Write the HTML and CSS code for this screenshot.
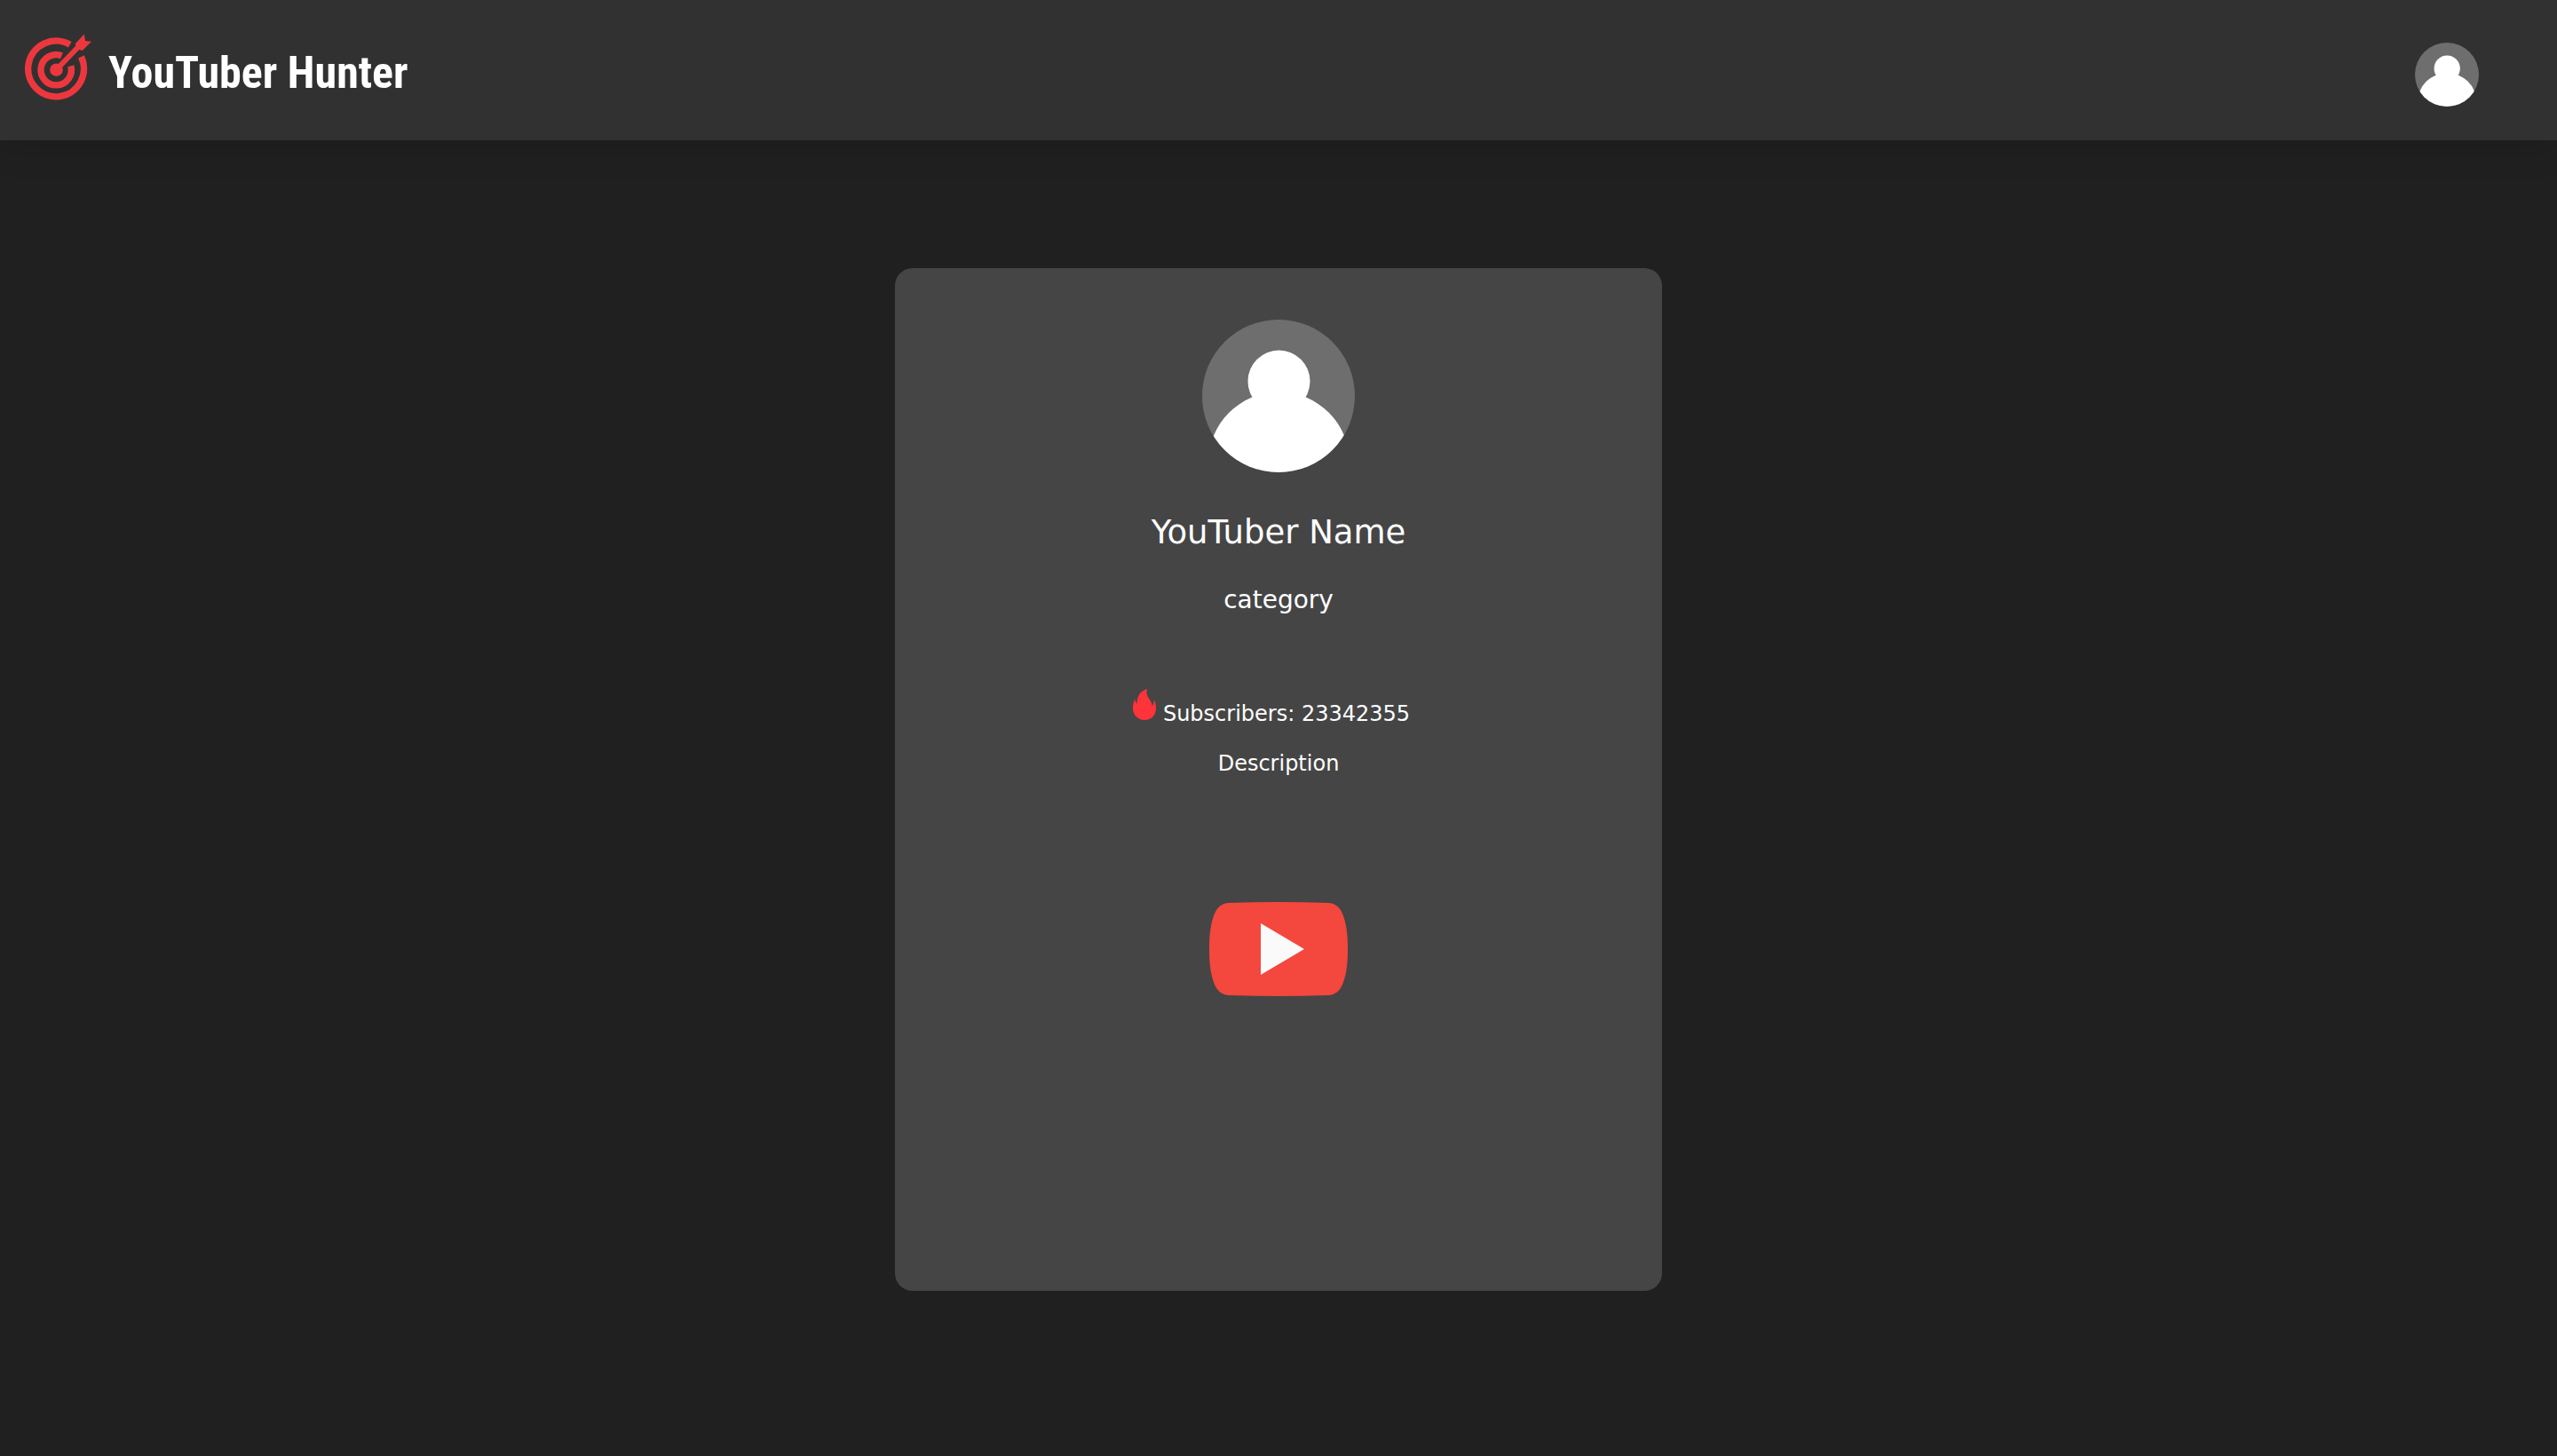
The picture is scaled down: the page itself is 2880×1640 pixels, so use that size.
FILE: index.html
```html
<!DOCTYPE html>
<html lang="en">
<head>
<meta charset="utf-8">
<meta name="viewport" content="width=device-width, initial-scale=1">
<title>YouTuber Hunter</title>
<link rel="stylesheet" href="styles.css">
</head>
<body>
<header class="topbar">
  <a class="brand" href="#">
    <svg class="brand-icon" viewBox="0 0 76 77" aria-hidden="true">
      <g fill="none" stroke="#ed373e" stroke-width="7.4">
        <path d="M50.8 12.200A31.400 31.400 0 1 0 63.400 25.800"/>
        <path d="M41.500 24.700A17.200 17.200 0 1 0 51.800 36.200"/>
      </g>
      <circle cx="35.500" cy="40.700" r="7.300" fill="#ed373e"/>
      <path d="M36 40 60 15" stroke="#ed373e" stroke-width="6"/>
      <path d="M56.800 11.200 66.800 0.500 68 8 75 8.800 64.800 19 61.500 18 57.500 14Z" fill="#ed373e"/>
    </svg>
    <span class="brand-name">YouTuber Hunter</span>
  </a>
  <button class="account" type="button" aria-label="Account">
    <svg class="avatar" viewBox="0 0 172 172" aria-hidden="true">
      <clipPath id="small-disc"><circle cx="86" cy="86" r="86"/></clipPath>
      <g clip-path="url(#small-disc)">
        <rect width="172" height="172" fill="#6e6e6e"/>
        <circle cx="86.500" cy="69.500" r="35" fill="#fff"/>
        <circle cx="86.500" cy="161" r="79.500" fill="#fff"/>
      </g>
    </svg>
  </button>
</header>
<main class="page">
  <article class="card">
    <svg class="portrait" viewBox="0 0 172 172" aria-hidden="true">
      <clipPath id="large-disc"><circle cx="86" cy="86" r="86"/></clipPath>
      <g clip-path="url(#large-disc)">
        <rect width="172" height="172" fill="#6e6e6e"/>
        <circle cx="86.500" cy="69.500" r="35" fill="#fff"/>
        <circle cx="86.500" cy="161" r="79.500" fill="#fff"/>
      </g>
    </svg>
    <h1 class="name">YouTuber Name</h1>
    <p class="category">category</p>
    <p class="subscribers">
      <svg class="flame" viewBox="0 0 26 35" aria-hidden="true">
        <path fill="#ff333a" d="M16 0C15 4 15.500 7 17.500 10C20 13.500 21.500 16 21.800 19.500C23.300 17.500 23.900 15 23.800 12.300C25.500 15 26 18 26 21.500C26 30 20.500 35 13.500 35C5.500 35 0 29.500 0 21.500C0 17.500 1 13.500 2.600 11.500C2.700 14 3.300 15.500 4.700 16.500C4.300 8 8.500 2.500 16 0Z"/>
      </svg>
      <span>Subscribers: 23342355</span>
    </p>
    <p class="description">Description</p>
    <a class="channel" href="#" aria-label="YouTube channel">
      <svg class="channel-icon" viewBox="0 0 156 106" aria-hidden="true">
        <path fill="#f4473e" d="M22 1Q78 -1 134 1C142 1.500 147 6 150 13C154.500 24 156 36 156 53S154.500 82 150 93C147 100 142 104.500 134 105Q78 107 22 105C14 104.500 9 100 6 93C1.500 82 0 70 0 53S1.500 24 6 13C9 6 14 1.500 22 1Z"/>
        <path fill="#fafafa" d="M58 24V82L107 53Z"/>
      </svg>
    </a>
  </article>
</main>
</body>
</html>
```
FILE: styles.css
```css
* {
  box-sizing: border-box;
}

body {
  margin: 0;
  min-height: 100vh;
  background: #202020;
  color: #fff;
  font-family: Verdana, "DejaVu Sans", sans-serif;
}

svg {
  display: block;
}

.topbar {
  display: flex;
  align-items: flex-start;
  justify-content: space-between;
  padding: 38px 88px 38px 28px;
  min-height: 158px;
  background: #313131;
  box-shadow: 0 4px 40px rgba(0, 0, 0, 0.16);
}

.brand {
  display: flex;
  gap: 18px;
  color: #fff;
  text-decoration: none;
}

.brand-icon {
  width: 76px;
  height: 77px;
}

.brand-name {
  padding-top: 12px;
  font: bold 50px/64px "Liberation Sans Narrow", "Roboto Condensed", "Arial Narrow", sans-serif;
}

.account {
  margin-top: 10px;
  padding: 0;
  border: 0;
  border-radius: 50%;
  background: none;
  cursor: pointer;
}

.avatar {
  width: 72px;
  height: 72px;
}

.page {
  padding: 5vw;
}

.card {
  display: flex;
  flex-direction: column;
  align-items: center;
  width: 30vw;
  min-width: 400px;
  min-height: 40vw;
  margin: 0 auto;
  padding: 58px;
  border-radius: 20px;
  background: #454545;
}

.portrait {
  width: 172px;
  height: 172px;
}

.name,
.category,
.subscribers,
.description {
  margin: 0;
  font-weight: normal;
}

.name {
  margin-top: 46px;
  font-size: 37px;
  line-height: 44px;
}

.category {
  margin-top: 36px;
  font-size: 28px;
  line-height: 36px;
}

.subscribers {
  display: flex;
  gap: 8px;
  margin-top: 82px;
  padding-right: 16px;
  font-size: 24px;
  line-height: 56px;
}

.flame {
  width: 26px;
  height: 35px;
}

.description {
  font-size: 24px;
  line-height: 56px;
}

.channel {
  margin-top: 128px;
}

.channel-icon {
  width: 156px;
  height: 106px;
}
```
